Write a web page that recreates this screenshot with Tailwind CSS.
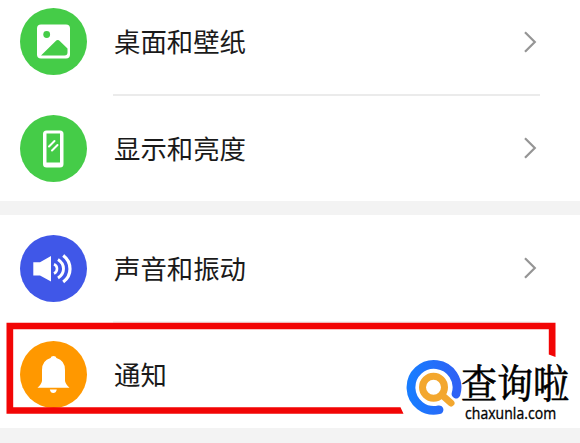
<!DOCTYPE html>
<html lang="zh-CN">
<head>
  <meta charset="UTF-8" />
  <meta name="viewport" content="width=device-width, initial-scale=1.0" />
  <title>设置</title>
  <script src="https://cdn.jsdelivr.net/npm/@tailwindcss/browser@4"></script>
</head>
<body class="relative w-[580px] h-[443px] overflow-hidden bg-[#f3f3f3] text-[#1a1a1a] font-['Noto_Sans_CJK_SC',sans-serif]">
  <main class="flex flex-col gap-[14px] text-[26.4px] leading-none">
    <section class="bg-white h-[201px] pt-2 pl-5 pr-10">
      <div class="flex items-center h-[67px]">
        <svg class="size-[67px] shrink-0" viewBox="0 0 67 67">
          <circle cx="33.5" cy="33.5" r="33.5" fill="#45cc48" />
          <rect x="17" y="16.5" width="33" height="34" rx="4" fill="#fff" />
          <circle cx="26.7" cy="26.5" r="3.4" fill="#45cc48" />
          <path d="M21 47.5 L35.5 33.2 Q37.8 31 40 33.2 L47.5 40.5 V44.5 Q47.5 47.5 44.5 47.5 Z" fill="#45cc48" />
        </svg>
        <span class="ml-[27px] flex-1">桌面和壁纸</span>
        <svg class="w-4 h-6" viewBox="0 0 16 24" fill="none" stroke="#959595" stroke-width="2.2"><path d="M1 2.2 L10.8 12 L1 21.8" /></svg>
      </div>
      <div class="mt-[19px] ml-[93px] h-[2px] bg-[#ebebeb]"></div>
      <div class="flex items-center h-[67px] mt-[18.5px]">
        <svg class="size-[67px] shrink-0" viewBox="0 0 67 67">
          <circle cx="33.5" cy="33.5" r="33.5" fill="#45cc48" />
          <rect x="23" y="15.5" width="20.5" height="37" rx="3.5" fill="#fff" />
          <rect x="26.5" y="18.5" width="13.5" height="29" fill="#45cc48" />
          <path d="M29 31.5 L34.5 26 M32 35.5 L37.5 30" stroke="#fff" stroke-width="2" stroke-linecap="round" />
        </svg>
        <span class="ml-[27px] flex-1">显示和亮度</span>
        <svg class="w-4 h-6" viewBox="0 0 16 24" fill="none" stroke="#959595" stroke-width="2.2"><path d="M1 2.2 L10.8 12 L1 21.8" /></svg>
      </div>
    </section>

    <section class="bg-white h-[213px] pt-[19.5px] pl-5 pr-10">
      <div class="flex items-center h-[67px]">
        <svg class="size-[67px] shrink-0" viewBox="0 0 67 67">
          <circle cx="33.5" cy="33.5" r="33.5" fill="#4057e8" />
          <path d="M13.3 27.2 H20 L31 21 V46.5 L20 40.5 H13.3 Z" fill="#fff" />
          <g fill="none" stroke="#fff">
            <path d="M34 29.2 Q37 30.5 37 33.7 Q37 37 34 38.5" stroke-width="2.6" />
            <path d="M38 24.5 Q43.5 28 43.5 33.8 Q43.5 39.5 38 43" stroke-width="2.9" />
            <path d="M43.2 20.5 Q50 25.5 50 34 Q50 42 43.2 47" stroke-width="3.2" />
          </g>
        </svg>
        <span class="ml-[27px] flex-1">声音和振动</span>
        <svg class="w-4 h-6" viewBox="0 0 16 24" fill="none" stroke="#959595" stroke-width="2.2"><path d="M1 2.2 L10.8 12 L1 21.8" /></svg>
      </div>
      <div class="mt-[19px] ml-[93px] h-[2px] bg-[#f3f3f3]"></div>
      <div class="flex items-center h-[67px] mt-[18.5px]">
        <svg class="size-[67px] shrink-0" viewBox="0 0 67 67">
          <circle cx="33.5" cy="33.5" r="33.5" fill="#ff9800" />
          <path d="M30.5 17 Q31 15 33.5 15 Q36 15 36.5 17 Q45 19.5 45 29 V40 Q45.5 43 49.5 46.8 H17.5 Q21.5 43 22 40 V29 Q22 19.5 30.5 17 Z" fill="#fff" />
          <path d="M29.8 48.5 H36.8 Q36 52 33.3 52 Q30.6 52 29.8 48.5 Z" fill="#fff" />
        </svg>
        <span class="ml-[27px] flex-1">通知</span>
      </div>
    </section>
  </main>

  <!-- red highlight frame, open where the logo sits -->
  <svg class="absolute inset-0 w-[580px] h-[443px]" viewBox="0 0 580 443">
    <path d="M6.5 322.7 H555.5 V357 L548.8 354.5 V329.3 H13.2 V407.3 H400.5 L403.5 413.8 H6.5 Z" fill="#f20505" />
  </svg>

  <!-- site logo -->
  <div class="absolute left-[405px] top-[359px] w-[175px] h-[68px] text-black">
    <svg class="absolute left-0 top-0 w-[58px] h-[58px]" viewBox="0 0 58 58" fill="none">
      <defs>
        <linearGradient id="ring" x1="0" y1="0" x2="1" y2="0">
          <stop offset="0" stop-color="#187cff" />
          <stop offset="1" stop-color="#2f62f5" />
        </linearGradient>
      </defs>
      <path d="M34 50.8 A23 23 0 1 1 51 35" stroke="url(#ring)" stroke-width="8.8" stroke-linecap="round" />
      <circle cx="28.5" cy="28.3" r="11" stroke="#f3a72e" stroke-width="7" />
      <path d="M37.5 36.5 L46 44" stroke="#f3a72e" stroke-width="7" stroke-linecap="round" />
    </svg>
    <div class="absolute left-[56px] top-[3px] text-[36px] leading-[36px] whitespace-nowrap origin-top-left scale-y-[1.1] [-webkit-text-stroke:0.6px_black] font-['Noto_Serif_CJK_SC','Noto_Sans_CJK_SC',serif]">查询啦</div>
    <div class="absolute left-[60px] top-[45px] text-[14px] leading-[18px] font-medium whitespace-nowrap origin-left scale-y-[1.1] tracking-[0.05px] [-webkit-text-stroke:0.3px_black] font-['Open_Sans',sans-serif]">chaxunla.com</div>
  </div>
</body>
</html>
